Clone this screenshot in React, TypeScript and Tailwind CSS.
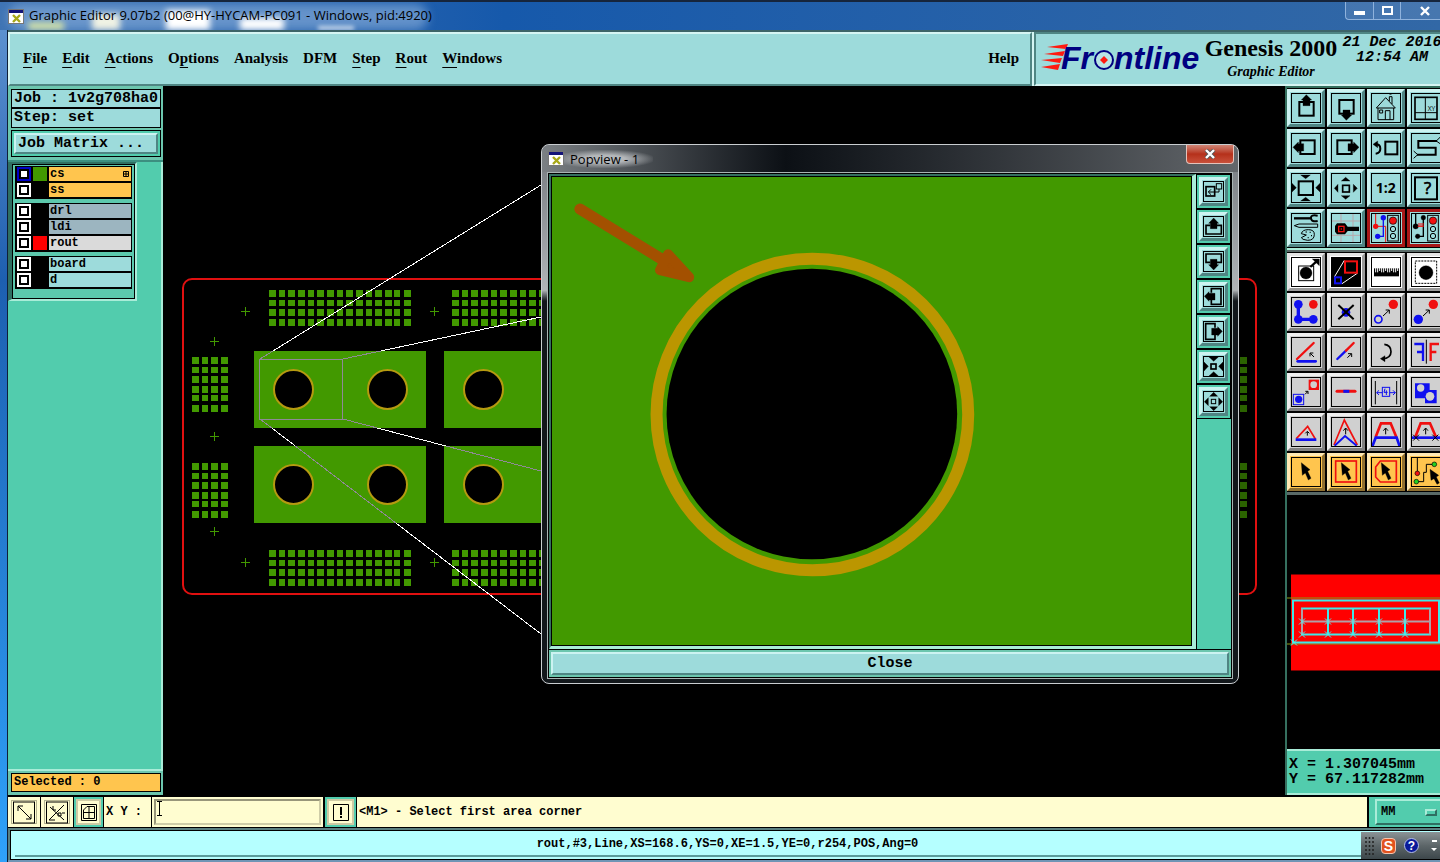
import { ReactNode, useState } from "react";
import clsx from "clsx";

const MENUS: [string, number][] = [
  ["File", 0],
  ["Edit", 0],
  ["Actions", 0],
  ["Options", 1],
  ["Analysis", -1],
  ["DFM", -1],
  ["Step", 0],
  ["Rout", 0],
  ["Windows", 0],
];

const LAYER_GROUPS = [
  [
    { name: "cs", swatch: "bg-[#429900]", face: "bg-[#ffc54e]", active: true },
    { name: "ss", swatch: "bg-black", face: "bg-[#ffc54e]" },
  ],
  [
    { name: "drl", swatch: "bg-black", face: "bg-[#9cb5c0]" },
    { name: "ldi", swatch: "bg-black", face: "bg-[#9cb5c0]" },
    { name: "rout", swatch: "bg-[#ff0000]", face: "bg-[#dadada]" },
  ],
  [
    { name: "board", swatch: "bg-black", face: "bg-[#9ddbdb]" },
    { name: "d", swatch: "bg-black", face: "bg-[#9ddbdb]" },
  ],
];

const RED = "#f01010";
const BLUE = "#1010f0";

type Tool = { label: string; art: ReactNode; tone?: "red" | "white" };

const cursor = <path d="M31 17L57 38L50 43L60 64L52 69L43 48L34 55Z" fill="#000" />;
const upArrow = <path d="M44 52V34M37 41L44 33L51 41" stroke="#000" strokeWidth="3" />;

const VIEW_TOOLS: Tool[] = [
  {
    label: "Pan up",
    art: (
      <>
        <rect x="25" y="27" width="43" height="41" strokeWidth="6" />
        <path d="M46 5L62 21H57V38H36V21H31Z" fill="#000" />
      </>
    ),
  },
  {
    label: "Pan down",
    art: (
      <>
        <rect x="25" y="21" width="43" height="41" strokeWidth="6" />
        <path d="M46 82L62 66H57V51H36V66H31Z" fill="#000" />
      </>
    ),
  },
  {
    label: "Home",
    art: (
      <path
        d="M16 45L44 14L73 45ZM21 45V80H68V45M43 80V53H57V80M26 51H35V60H26ZM55 24V11H63V33M56 4L66 1"
        strokeWidth="3"
      />
    ),
  },
  {
    label: "Go to coordinates",
    art: (
      <>
        <rect x="12" y="13" width="66" height="66" strokeWidth="5" />
        <path d="M43 12V78M12 59H78" strokeWidth="3" />
        <text x="50" y="54" fontSize="20" fill="#000" stroke="none">XY</text>
      </>
    ),
  },
  {
    label: "Pan left",
    art: (
      <>
        <rect x="28" y="22" width="43" height="41" strokeWidth="6" />
        <path d="M6 43L22 27V32H38V54H22V59Z" fill="#000" />
      </>
    ),
  },
  {
    label: "Pan right",
    art: (
      <>
        <rect x="19" y="22" width="43" height="41" strokeWidth="6" />
        <path d="M84 43L68 27V32H51V54H68V59Z" fill="#000" />
      </>
    ),
  },
  {
    label: "Previous view",
    art: (
      <>
        <rect x="43" y="26" width="36" height="38" strokeWidth="6" />
        <path d="M14 34Q28 34 28 47T14 62" strokeWidth="6" />
        <path d="M6 34L20 24V44Z" fill="#000" />
      </>
    ),
  },
  {
    label: "Snake",
    art: (
      <>
        <path d="M78 24H22V44H74V65H18" strokeWidth="6" />
        <path d="M76 24L88 12M76 24L90 34M20 65L8 54M20 65L8 76" strokeWidth="3" />
      </>
    ),
  },
  {
    label: "Zoom out",
    art: (
      <>
        <rect x="23" y="25" width="43" height="41" strokeWidth="6" />
        <path d="M29 6H58L44 17ZM29 84H58L44 73ZM2 30V58L16 44ZM88 30V58L74 44Z" fill="#000" />
      </>
    ),
  },
  {
    label: "Zoom in",
    art: (
      <>
        <rect x="35" y="37" width="20" height="20" strokeWidth="5" />
        <path d="M31 24H57L44 13ZM31 68H57L44 79ZM21 34V58L10 46ZM67 34V58L79 46Z" fill="#000" />
      </>
    ),
  },
  {
    label: "Scale one to two",
    art: (
      <text x="44" y="60" fontSize="42" fontWeight="700" textAnchor="middle" fill="#000" stroke="none">
        1:2
      </text>
    ),
  },
  {
    label: "Query",
    art: (
      <>
        <rect x="12" y="13" width="66" height="66" strokeWidth="6" />
        <text x="50" y="64" fontSize="50" textAnchor="middle" fill="#000" strokeWidth="2">
          ?
        </text>
      </>
    ),
  },
  {
    label: "Preferences",
    art: (
      <>
        <path d="M9 16H62" strokeWidth="7" />
        <path d="M80 8Q58 4 60 16T80 24" strokeWidth="6" />
        <path d="M10 38L24 33H80V43H24Z" strokeWidth="3" />
        <path d="M31 62Q34 50 52 50T70 64Q70 82 50 82Q32 80 31 74L46 66Z" strokeWidth="3" />
        <path d="M44 57h3M56 58h3M60 68h3M50 74h3" strokeWidth="4" />
      </>
    ),
  },
  {
    label: "Magnify",
    art: (
      <>
        <path d="M30 2V88M66 2V88M2 24H88M2 67H88" stroke="#b9a9ad" strokeWidth="3" />
        <path d="M18 31H42L50 41H84V54H50L42 64H18L12 56V39Z" fill="#000" stroke="none" />
        <rect x="23" y="40" width="16" height="16" stroke={RED} strokeWidth="4" />
        <rect x="29" y="46" width="4" height="4" fill={RED} stroke="none" />
      </>
    ),
  },
  {
    label: "Net check",
    tone: "red",
    art: (
      <>
        <path d="M14 2V40H44V88" stroke={RED} strokeWidth="3" />
        <circle cx="14" cy="40" r="8" fill={RED} stroke="none" />
        <path d="M37 14V70H20" stroke={BLUE} strokeWidth="4" />
        <circle cx="37" cy="14" r="8" fill={BLUE} stroke="none" />
        <circle cx="20" cy="70" r="8" fill={BLUE} stroke="none" />
        <rect x="50" y="7" width="32" height="77" strokeWidth="3" />
        <circle cx="66" cy="23" r="11" fill={RED} strokeWidth="2" />
        <circle cx="66" cy="48" r="8" strokeWidth="3" />
        <circle cx="66" cy="69" r="8" strokeWidth="3" />
      </>
    ),
  },
  {
    label: "Net resistance",
    tone: "red",
    art: (
      <>
        <path d="M37 14V70H20M14 2V40" strokeWidth="4" />
        <circle cx="14" cy="40" r="8" fill="#000" />
        <circle cx="37" cy="14" r="7" fill="#000" />
        <circle cx="20" cy="70" r="7" fill="#000" />
        <path d="M20 40H38M24 40V30M30 40V30M36 40V30" stroke={RED} strokeWidth="3" />
        <rect x="50" y="7" width="32" height="77" strokeWidth="3" />
        <circle cx="66" cy="23" r="11" fill={RED} strokeWidth="2" />
        <circle cx="66" cy="48" r="8" strokeWidth="3" />
        <circle cx="66" cy="69" r="8" strokeWidth="3" />
      </>
    ),
  },
];

const EDIT_TOOLS: Tool[] = [
  {
    label: "Move feature",
    tone: "white",
    art: (
      <>
        <rect x="23" y="27" width="45" height="44" strokeWidth="3" />
        <circle cx="45" cy="48" r="18" fill="#000" />
        <path d="M58 30L76 14" strokeWidth="7" />
        <path d="M64 6H85V26Z" fill="#000" />
      </>
    ),
  },
  {
    label: "Popview",
    tone: "white",
    art: (
      <>
        <rect width="90" height="90" fill="#000" />
        <path d="M40 10L10 60M80 48L33 80" stroke="#fff" strokeWidth="3" />
        <rect x="42" y="13" width="36" height="34" stroke={RED} strokeWidth="6" />
        <rect x="12" y="61" width="18" height="18" stroke={BLUE} strokeWidth="6" />
      </>
    ),
  },
  {
    label: "Measure",
    tone: "white",
    art: (
      <>
        <rect x="9" y="34" width="75" height="24" fill="#000" stroke="none" />
        <path
          d="M14 32V46M20 32V46M26 32V42M32 32V46M38 32V46M44 32V42M50 32V46M56 32V46M62 32V42M68 32V46M74 32V46M80 32V42"
          stroke="#fff"
          strokeWidth="3"
        />
      </>
    ),
  },
  {
    label: "Select area",
    tone: "white",
    art: (
      <>
        <rect x="13" y="12" width="64" height="67" strokeWidth="3" strokeDasharray="6 3" />
        <circle cx="45" cy="47" r="21" fill="#000" />
      </>
    ),
  },
  {
    label: "Connect pads",
    art: (
      <>
        <path d="M22 22V67H67" stroke={BLUE} strokeWidth="10" />
        <circle cx="22" cy="22" r="13" fill={BLUE} stroke="none" />
        <circle cx="22" cy="67" r="13" fill={BLUE} stroke="none" />
        <circle cx="67" cy="67" r="13" fill={BLUE} stroke="none" />
        <circle cx="67" cy="22" r="13" fill={RED} stroke="none" />
      </>
    ),
  },
  {
    label: "Delete",
    art: (
      <>
        <circle cx="45" cy="46" r="13" fill={BLUE} stroke="none" />
        <path d="M22 24L68 67M68 24L22 67" strokeWidth="6" />
      </>
    ),
  },
  {
    label: "Change symbol",
    art: (
      <>
        <circle cx="67" cy="22" r="14" fill={RED} stroke="none" />
        <circle cx="22" cy="67" r="11" stroke={BLUE} strokeWidth="5" />
        <path d="M36 57L54 40M44 39H55V50" strokeWidth="3" />
      </>
    ),
  },
  {
    label: "Copy",
    art: (
      <>
        <circle cx="67" cy="22" r="14" fill={RED} stroke="none" />
        <circle cx="22" cy="67" r="14" fill={BLUE} stroke="none" />
        <path d="M36 57L54 40M44 39H55V50" strokeWidth="3" />
      </>
    ),
  },
  {
    label: "Change angle",
    art: (
      <>
        <path d="M20 73H74" stroke={BLUE} strokeWidth="8" strokeLinecap="round" />
        <path d="M18 66L68 18" stroke={RED} strokeWidth="7" strokeLinecap="round" />
        <path d="M69 60L58 49M57 58V48H67" strokeWidth="3" />
      </>
    ),
  },
  {
    label: "Extend line",
    art: (
      <>
        <path d="M19 66L45 41" stroke={BLUE} strokeWidth="7" strokeLinecap="round" />
        <path d="M45 41L68 18" stroke={RED} strokeWidth="7" strokeLinecap="round" />
        <path d="M49 62L61 51M51 50H62V60" strokeWidth="3" />
      </>
    ),
  },
  {
    label: "Rotate",
    art: (
      <>
        <path d="M40 22Q60 24 60 44T34 65" strokeWidth="5" />
        <path d="M28 65L42 56V74Z" fill="#000" />
      </>
    ),
  },
  {
    label: "Mirror",
    art: (
      <>
        <path d="M10 21H36V72M18 45H36" stroke={BLUE} strokeWidth="7" />
        <path d="M84 21H59V72M76 45H59" stroke={RED} strokeWidth="7" />
        <path d="M46 8V80" strokeWidth="3" />
      </>
    ),
  },
  {
    label: "Replace",
    art: (
      <>
        <rect x="53" y="8" width="31" height="31" fill={RED} stroke="none" />
        <circle cx="68" cy="23" r="10" fill="#d0d0d0" stroke="none" />
        <rect x="7" y="52" width="31" height="31" stroke={BLUE} strokeWidth="3" />
        <circle cx="23" cy="67" r="11" fill={BLUE} stroke="none" />
        <path d="M42 52L50 44M43 43H51V51" strokeWidth="3" />
      </>
    ),
  },
  {
    label: "Break line",
    art: (
      <>
        <path d="M18 43H72" stroke={RED} strokeWidth="9" strokeLinecap="round" />
        <path d="M37 43H55" stroke={BLUE} strokeWidth="9" />
      </>
    ),
  },
  {
    label: "Spacing",
    art: (
      <>
        <path d="M13 12V82M77 12V82" strokeWidth="3" />
        <g stroke={BLUE} strokeWidth="3">
          <rect x="34" y="31" width="22" height="27" />
          <path d="M34 47H17M24 40L17 47L24 54M56 47H73M66 40L73 47L66 54M42 35L39 46H50M46 40V54" />
        </g>
      </>
    ),
  },
  {
    label: "Merge",
    art: (
      <>
        <path d="M12 19H56V39H77V79H42V64H12Z" fill={BLUE} stroke="none" />
        <circle cx="29" cy="33" r="11" fill="#d0d0d0" stroke="none" />
        <circle cx="57" cy="58" r="13" fill="#d0d0d0" stroke="none" />
      </>
    ),
  },
  {
    label: "Slide segment",
    art: (
      <>
        <path d="M16 65L50 28L73 66" stroke={RED} strokeWidth="5" />
        <path d="M14 68H76" stroke={BLUE} strokeWidth="8" />
        <path d="M49 56V44M43 49L49 43L55 49" strokeWidth="3" />
      </>
    ),
  },
  {
    label: "Move corner",
    art: (
      <>
        <path d="M9 84L40 9L79 84" stroke={RED} strokeWidth="5" />
        <path d="M11 86L42 57L77 86" stroke={BLUE} strokeWidth="6" />
        {upArrow}
      </>
    ),
  },
  {
    label: "Stretch parallel",
    art: (
      <>
        <path d="M14 60L30 19H59L76 60" stroke={RED} strokeWidth="8" />
        <path d="M4 88L14 62H77L86 88" stroke={BLUE} strokeWidth="8" />
        {upArrow}
      </>
    ),
  },
  {
    label: "Stretch fixed",
    art: (
      <>
        <path d="M13 60L29 19H57L75 60" stroke={RED} strokeWidth="8" />
        <path d="M0 62H90" stroke={BLUE} strokeWidth="8" />
        <path d="M6 53L24 71M24 53L6 71M64 53L82 71M82 53L64 71" strokeWidth="3" />
        {upArrow}
      </>
    ),
  },
];

const SELECT_TOOLS: Tool[] = [
  { label: "Select single", art: cursor },
  {
    label: "Select rectangle",
    art: (
      <>
        <rect x="14" y="12" width="62" height="63" stroke={RED} strokeWidth="5" />
        {cursor}
      </>
    ),
  },
  {
    label: "Select polygon",
    art: (
      <>
        <path d="M28 12H76V75H28L14 60V30Z" stroke={RED} strokeWidth="5" />
        {cursor}
      </>
    ),
  },
  {
    label: "Select net",
    art: (
      <>
        <path d="M19 2V44M16 74H38V46H46V22H66" strokeWidth="3" />
        <circle cx="19" cy="49" r="7" fill={RED} strokeWidth="2" />
        <circle cx="16" cy="74" r="7" fill="#22d022" strokeWidth="2" />
        <circle cx="70" cy="22" r="7" fill="#22d022" strokeWidth="2" />
        <path d="M57 37L83 55L76 60L85 78L78 82L69 65L60 70Z" fill="#000" />
      </>
    ),
  },
];

const POP_TOOLS: Tool[] = [
  {
    label: "Select popup area",
    art: (
      <>
        <rect x="9" y="17" width="26" height="28" strokeWidth="5" />
        <rect x="40" y="8" width="16" height="16" strokeWidth="3" />
        <path d="M48 24V33H16M24 25L16 33L24 41" strokeWidth="3" />
      </>
    ),
  },
  {
    label: "Popup up",
    art: (
      <>
        <path d="M22 28H9V54H55V28H42" strokeWidth="5" />
        <path d="M32 6L47 22H42V38H22V22H17Z" fill="#000" />
      </>
    ),
  },
  {
    label: "Popup down",
    art: (
      <>
        <path d="M22 34H9V9H55V34H42" strokeWidth="5" />
        <path d="M32 57L47 41H42V25H22V41H17Z" fill="#000" />
      </>
    ),
  },
  {
    label: "Popup left",
    art: (
      <>
        <path d="M25 20V8H54V55H25V42" strokeWidth="5" />
        <path d="M4 31L18 17V22H36V42H18V46Z" fill="#000" />
      </>
    ),
  },
  {
    label: "Popup right",
    art: (
      <>
        <path d="M36 20V8H8V55H36V42" strokeWidth="5" />
        <path d="M58 31L44 17V22H26V42H44V46Z" fill="#000" />
      </>
    ),
  },
  {
    label: "Popup zoom out",
    art: (
      <>
        <rect x="24" y="24" width="15" height="15" strokeWidth="5" />
        <path d="M18 3H46L32 16ZM18 60H46L32 47ZM3 18V45L16 31ZM60 18V45L47 31Z" fill="#000" />
      </>
    ),
  },
  {
    label: "Popup zoom in",
    art: (
      <>
        <rect x="25" y="25" width="13" height="13" strokeWidth="3" />
        <path d="M20 16H44L32 4ZM20 47H44L32 59ZM16 20V44L4 32ZM47 20V44L59 32Z" fill="#000" />
      </>
    ),
  },
];

function ToolButton({ tool, palette }: { tool: Tool; palette: "teal" | "grey" | "gold" }) {
  return (
    <button
      aria-label={tool.label}
      className={clsx(
        "h-[38px] w-[38px] shrink-0 border-[3px] p-px",
        tool.tone === "red" && "border-[#a81818] bg-[#9ddbdb]",
        tool.tone === "white" && "border-t-[#e4e4e4] border-l-[#e4e4e4] border-r-[#9a9a9a] border-b-[#9a9a9a] bg-white",
        !tool.tone && palette === "teal" &&
          "border-t-[#ccf3f1] border-l-[#ccf3f1] border-r-[#4f8583] border-b-[#4f8583] bg-[#9ddbdb]",
        !tool.tone && palette === "grey" &&
          "border-t-[#efefef] border-l-[#efefef] border-r-[#808080] border-b-[#808080] bg-[#d0d0d0]",
        palette === "gold" &&
          "border-t-[#ffe9b4] border-l-[#ffe9b4] border-r-[#8f6f30] border-b-[#8f6f30] bg-[#ffc54e]"
      )}
    >
      <span className="block h-[30px] w-[30px] border border-black">
        <svg viewBox="3 3 84 84" fill="none" stroke="#000" className="h-7 w-7" aria-hidden>
          {tool.art}
        </svg>
      </span>
    </button>
  );
}

function AppIcon() {
  return (
    <svg width="16" height="15" viewBox="0 0 16 15" aria-hidden className="z-10 shrink-0">
      <rect x="0.5" y="0.5" width="15" height="14" fill="#fff" stroke="#777" />
      <rect x="1" y="1" width="14" height="3" fill="#141478" />
      <path d="M5 6L12 13M12 6L5 13" stroke="#a8a818" strokeWidth="2.4" />
    </svg>
  );
}

function Logo() {
  return (
    <svg
      width="162"
      height="44"
      viewBox="0 -6 162 44"
      role="img"
      aria-label="Frontline"
      className="shrink-0 overflow-visible"
    >
      <path fill="#ff1a10" d="M6 4L27 1L25 6ZM3 11L24 8L22 13ZM0 17L21 15L19 20ZM0 24L19 21L17 27Z" />
      <g
        fill="#000080"
        fontFamily="'Liberation Sans', sans-serif"
        fontSize="32"
        fontWeight="700"
        fontStyle="italic"
      >
        <text x="20" y="26">Fr</text>
        <text x="73" y="26">ntline</text>
      </g>
      <circle cx="63" cy="17" r="9" fill="#b8e4e4" stroke="#000080" strokeWidth="2" />
      <path d="M63 13L67 17L63 21L59 17Z" fill="#ff1a10" />
    </svg>
  );
}

function Pads({ x, y, cols, rows }: { x: number; y: number; cols: number; rows: number }) {
  const pads: ReactNode[] = [];
  for (let r = 0; r < rows; r++) {
    for (let c = 0; c < cols; c++) {
      pads.push(
        <rect
          key={`${r}-${c}`}
          x={Math.round(x + c * 9.65)}
          y={Math.round(y + r * 9.6)}
          width={c % 3 === 1 ? 6 : 7}
          height={r % 3 === 1 ? 6 : 7}
        />
      );
    }
  }
  return <g shapeRendering="crispEdges">{pads}</g>;
}

const PANELS = [
  [254, 351],
  [254, 446],
  [444, 351],
  [444, 446],
];
const CROSSES = [
  [245, 311],
  [434, 311],
  [245, 562],
  [434, 562],
  [214, 341],
  [214, 436],
  [214, 531],
];
const RAYS = "M260 359L541 185M343 359L541 317M343 419L541 471M260 419L541 634";

function Board() {
  return (
    <svg
      viewBox="163 86 1122 709"
      preserveAspectRatio="xMinYMin meet"
      className="h-full w-full"
      aria-label="Board view"
    >
      <defs>
        <clipPath id="panels">
          {PANELS.map(([x, y]) => (
            <rect key={`${x}-${y}`} x={x} y={y} width="172" height="77" />
          ))}
        </clipPath>
      </defs>
      <rect x="183" y="279" width="1073" height="315" rx="9" fill="none" stroke="#e01010" strokeWidth="2" />
      <g fill="#429900">
        <Pads x={269} y={290} cols={15} rows={4} />
        <Pads x={452} y={290} cols={15} rows={4} />
        <Pads x={269} y={550} cols={15} rows={4} />
        <Pads x={452} y={550} cols={15} rows={4} />
        <Pads x={192} y={357} cols={4} rows={6} />
        <Pads x={192} y={463} cols={4} rows={6} />
        <g opacity="0.65">
          <Pads x={1240} y={357} cols={1} rows={6} />
          <Pads x={1240} y={463} cols={1} rows={6} />
        </g>
      </g>
      {PANELS.map(([x, y]) => (
        <g key={`${x}-${y}`}>
          <rect x={x} y={y} width="172" height="77" fill="#429900" />
          <circle cx={x + 39.5} cy={y + 38.5} r="19.5" stroke="#b59a10" strokeWidth="2" />
          <circle cx={x + 133.5} cy={y + 38.5} r="19.5" stroke="#b59a10" strokeWidth="2" />
        </g>
      ))}
      <path d={CROSSES.map(([x, y]) => `M${x - 4} ${y}.5h9M${x}.5 ${y - 4}v9`).join("")} stroke="#429900" />
      <path d={RAYS} stroke="#fff" shapeRendering="crispEdges" />
      <path d={RAYS} stroke="#8f8a96" clipPath="url(#panels)" shapeRendering="crispEdges" />
      <rect x="259.5" y="359.5" width="83" height="60" fill="none" stroke="#8f8a96" />
    </svg>
  );
}

function Popview({ onClose }: { onClose: () => void }) {
  return (
    <section
      role="dialog"
      aria-label="Popview - 1"
      className="absolute left-[378px] top-[58px] flex h-[540px] w-[698px] flex-col rounded-lg border border-[#c9cdd0] bg-linear-to-b from-[#74797e] via-[#b0b4b7] via-27% to-[#12171b] to-29% px-[5px] pb-[4px]"
    >
      <header className="-mx-[5px] flex h-[27px] shrink-0 items-center rounded-t-lg bg-linear-to-r from-[#7b8084] via-[#0c1015] via-35% to-[#63676b] pl-[6px]">
        <AppIcon />
        <h2 className="-ml-2 flex-1 text-[13px] leading-5">
          <span className="bg-radial from-[#b4b7ba] from-30% to-transparent to-75% px-3.5">Popview - 1</span>
        </h2>
        <button
          onClick={onClose}
          aria-label="Close popview"
          className="mr-1 flex h-[19px] w-[48px] items-center justify-center self-start rounded-b border border-t-0 border-[#e5c3bb] bg-linear-to-b from-[#d08475] via-[#b5301a] via-50% to-[#c8503a]"
        >
          <svg width="12" height="10" viewBox="0 0 12 10" aria-hidden>
            <path d="M2 1L10 9M10 1L2 9" stroke="#555" strokeWidth="4" />
            <path d="M2 1L10 9M10 1L2 9" stroke="#fff" strokeWidth="2.4" />
          </svg>
        </button>
      </header>
      <div className="flex min-h-0 flex-1 flex-col border border-[#a9b4b4] bg-black p-px">
        <div className="flex min-h-0 flex-1">
          <div className="min-w-0 flex-1 border-t-2 border-r-4 border-b-[3px] border-l-2 border-t-[#35705f] border-l-[#35705f] border-r-[#a9ecd8] border-b-[#a9ecd8]">
            <svg
              viewBox="552 177 640 467"
              preserveAspectRatio="xMidYMid slice"
              className="h-full w-full border border-black bg-[#429900]"
              aria-label="Enlarged hole"
            >
              <circle cx="813" cy="414" r="155.5" fill="none" stroke="#bb9600" strokeWidth="12" />
              <circle cx="812.5" cy="413.5" r="145" />
              <g fill="#a35000" stroke="#a35000" strokeLinejoin="round" strokeLinecap="round">
                <path d="M581 209L666 261" strokeWidth="11" />
                <path d="M669 254L690 277L661 270Z" strokeWidth="10" />
              </g>
            </svg>
          </div>
          <div className="w-[35px] shrink-0 border-l border-black bg-[#52ccad]">
            <div className="flex flex-col gap-[2px] bg-black py-px">
              {POP_TOOLS.map((t) => (
                <button key={t.label} aria-label={t.label} className="h-[33px] w-[33px] bg-[#52ccad] p-[2px]">
                  <span className="block h-[29px] w-[29px] border-[3px] border-t-[#ccf3f1] border-l-[#ccf3f1] border-r-[#4f8583] border-b-[#4f8583] bg-[#9ddbdb] p-px">
                    <svg viewBox="0 0 63 63" fill="none" stroke="#000" className="h-[21px] w-[21px]" aria-hidden>
                      <rect x="1.5" y="1.5" width="60" height="60" strokeWidth="3" />
                      {t.art}
                    </svg>
                  </span>
                </button>
              ))}
            </div>
          </div>
        </div>
        <div className="mt-px bg-[#6cc6ae] p-[2px]">
          <button
            onClick={onClose}
            className="block h-[23px] w-full border-2 border-t-[#ccf3f1] border-l-[#ccf3f1] border-r-[#4f8583] border-b-[#4f8583] bg-[#9ddbdb] font-['Liberation_Mono',monospace] text-[15px] leading-[18px] font-bold"
          >
            Close
          </button>
        </div>
      </div>
    </section>
  );
}

function Overview() {
  const marks = [1302, 1328, 1353, 1379, 1405].flatMap((x) => [
    [x, 622],
    [x, 635],
  ]);
  return (
    <svg
      viewBox="1287 497 153 251"
      preserveAspectRatio="xMinYMid meet"
      className="min-h-0 w-full flex-1 bg-black"
      fill="none"
      aria-label="Board overview"
    >
      <rect x="1291" y="575" width="160" height="96" fill="#ff0000" />
      <rect x="1286.5" y="598.5" width="170" height="46" stroke="#8a9a10" />
      <rect x="1293" y="601" width="146" height="42" stroke="#40e8e8" strokeWidth="2" />
      <path
        d="M1301 609H1431M1301 635H1431M1328 609V635M1353 609V635M1379 609V635M1405 609V635"
        stroke="#40e8e8"
        strokeWidth="2"
      />
      <path d="M1302 609V635M1430 609V635M1301 622H1431" stroke="#b0a0a8" strokeWidth="2" />
      <path
        d={[...marks, [1294, 643]].map(([x, y]) => `M${x - 3} ${y - 3}l6 6m0-6l-6 6`).join("")}
        stroke="#50f0f0"
      />
    </svg>
  );
}

function SmallArt({ children }: { children: ReactNode }) {
  return (
    <svg width="22" height="23" viewBox="0 0 22 23" fill="none" stroke="#000" aria-hidden>
      <rect x="0.5" y="1" width="21" height="21" />
      {children}
    </svg>
  );
}

function Tray() {
  return (
    <div className="absolute right-0 bottom-px flex h-[27px] w-[79px] items-center gap-2 bg-linear-to-b from-[#8b9396] via-[#5d6669] to-[#3d474b] pl-1">
      <svg width="9" height="18" viewBox="0 0 9 18" fill="none" stroke="#222" strokeDasharray="2 2" aria-hidden>
        <path d="M1 0V18M4.5 0V18M8 0V18" strokeWidth="1.5" />
      </svg>
      <button
        aria-label="Input method"
        className="-ml-px flex h-4 w-[15px] items-center justify-center rounded-sm border border-[#f4c5b0] bg-[#e2531f] font-['Liberation_Sans',sans-serif] text-sm leading-4 font-bold text-white"
      >
        S
      </button>
      <button
        aria-label="Help"
        className="flex h-[15px] w-[15px] items-center justify-center rounded-full border border-[#b5c0e8] bg-[#0a1a9a] font-['Liberation_Sans',sans-serif] text-xs leading-3 font-bold text-white"
      >
        ?
      </button>
      <svg width="7" height="13" viewBox="0 0 7 13" fill="#fff" aria-hidden className="ml-1">
        <path d="M1 1H6V3H1ZM0 9H6L3 12Z" />
      </svg>
    </div>
  );
}

export default function App() {
  const [coords, setCoords] = useState("");
  const [popOpen, setPopOpen] = useState(true);

  return (
    <div className="flex h-screen w-full flex-col overflow-hidden bg-[#22599f] font-['Open_Sans','Noto_Sans',sans-serif] text-black">
      <header className="relative flex h-[30px] shrink-0 items-center overflow-hidden border-t-2 border-[#16253c] bg-linear-to-r from-[#3f74b4] via-[#1659ab] via-35% to-[#3268a6] pl-2">
        {/* desktop icons showing through the glass */}
        <div aria-hidden className="absolute inset-x-0 bottom-0 h-[26px]">
          <div className="absolute top-0 left-2 h-full w-[420px] rounded-full bg-[#7fa6d6]/70 blur-[5px]" />
          <div className="absolute bottom-0 left-7 h-2 w-9 bg-[#d3e2a8] blur-[3px]" />
          <div className="absolute bottom-0 left-[92px] h-4 w-7 bg-[#f0f2e4] blur-[3px]" />
          <div className="absolute bottom-0 left-[166px] h-5 w-11 bg-white blur-[3px]" />
          <div className="absolute bottom-0 left-[240px] h-3 w-11 bg-white blur-[3px]" />
          <div className="absolute bottom-0 left-[318px] h-1 w-9 bg-white/70 blur-[2px]" />
        </div>
        <AppIcon />
        <h1 className="relative min-w-0 flex-1 pb-[2px] pl-[5px] text-[13px] leading-5 whitespace-nowrap">
          Graphic Editor 9.07b2 (00@HY-HYCAM-PC091 - Windows, pid:4920)
        </h1>
        <div className="relative flex h-[18px] w-[95px] shrink-0 self-start overflow-hidden rounded-bl border-b border-l border-[#8fb2dc] bg-white/10">
          <button aria-label="Minimize" className="flex w-7 shrink-0 items-center justify-center border-r border-[#8fb2dc]">
            <span className="mt-1 h-1 w-[11px] bg-white" />
          </button>
          <button aria-label="Maximize" className="flex w-[27px] shrink-0 items-center justify-center border-r border-[#8fb2dc]">
            <span className="h-[9px] w-[11px] border-2 border-white" />
          </button>
          <button aria-label="Close" className="flex w-[47px] shrink-0 items-center justify-center">
            <svg width="12" height="10" viewBox="0 0 12 10" aria-hidden>
              <path d="M2 1L10 9M10 1L2 9" stroke="#fff" strokeWidth="2.4" />
            </svg>
          </button>
        </div>
      </header>

      <div className="flex min-h-0 flex-1">
        <div className="w-2 shrink-0 border-r border-[#0f1f38] bg-linear-to-b from-[#5c90cf] via-[#1d5fb0] via-30% to-[#2fa2fb]" />

        <div className="flex min-w-0 flex-1 flex-col bg-black">
          {/* menu bar and product banner */}
          <div className="flex h-14 shrink-0 border-t-2 border-[#3d6468] bg-[#d5f5f3] font-['Liberation_Serif',serif]">
            <nav className="flex min-w-0 flex-1 items-center gap-[15px] border-2 border-t-[#d5f5f3] border-l-[#d5f5f3] border-r-[#4f8583] border-b-[#4f8583] bg-[#9ddbdb] pr-[11px] pb-[3px] pl-[13px] text-[15px] font-bold">
              {MENUS.map(([name, at]) => (
                <button key={name} className="leading-5">
                  {at < 0 ? (
                    name
                  ) : (
                    <>
                      {name.slice(0, at)}
                      <span className="underline underline-offset-4">{name[at]}</span>
                      {name.slice(at + 1)}
                    </>
                  )}
                </button>
              ))}
              <button className="ml-auto leading-5">Help</button>
            </nav>
            <div className="ml-[2px] flex w-[406px] shrink-0 items-center overflow-hidden border-t-2 border-b-2 border-l-2 border-t-[#4f8583] border-l-[#4f8583] border-b-[#d5f5f3] bg-[#9ddbdb] pl-[5px]">
              <Logo />
              <div className="w-[136px] shrink-0 pb-[2px] text-center whitespace-nowrap">
                <p className="text-[24px] leading-7 font-bold">Genesis 2000</p>
                <p className="text-[14px] leading-5 font-bold italic">Graphic Editor</p>
              </div>
              <div className="w-[106px] shrink-0 self-start pt-px text-center font-['Liberation_Mono',monospace] text-[15px] leading-[15px] font-bold whitespace-nowrap italic">
                <p>21 Dec 2016</p>
                <p>12:54 AM</p>
              </div>
            </div>
          </div>

          <div className="flex min-h-0 flex-1">
            {/* job and layers */}
            <aside className="flex w-[155px] shrink-0 flex-col bg-[#52ccad] font-['Liberation_Mono',monospace] font-bold">
              <div className="flex flex-col gap-[2px] border-b-2 border-[#3c8f80] bg-[#6cc6ae] p-[3px] pr-[2px] text-[15px] leading-4">
                <div className="divide-y-2 divide-black border border-black bg-[#9ddbdb] whitespace-pre">
                  <p className="h-[19px] px-[2px] pt-px">Job : 1v2g708ha0</p>
                  <p className="h-[18px] px-[2px] pt-px">Step: set</p>
                </div>
                <div className="border border-black bg-[#52ccad] p-[2px]">
                  <button className="block h-[21px] w-full border-2 border-t-[#ccf3f1] border-l-[#ccf3f1] border-r-[#4f8583] border-b-[#4f8583] bg-[#9ddbdb] pl-[2px] text-left font-bold">
                    Job Matrix ...
                  </button>
                </div>
              </div>
              <div className="min-h-0 flex-1 border-r-2 border-b-2 border-[#a9ecd8]">
                <fieldset className="w-[129px] border-t-2 border-r-2 border-b-2 border-l-4 border-t-[#2f6f62] border-l-[#2f6f62] border-r-[#a9ecd8] border-b-[#a9ecd8]">
                  <div className="flex flex-col gap-1 border border-black bg-[#5cc9ad] pt-px pb-[9px] pl-[2px]">
                    {LAYER_GROUPS.map((group, i) => (
                      <div key={i} className="flex w-[117px] flex-col gap-[2px] bg-black p-px pb-[2px] pl-[2px]">
                        {group.map((layer) => (
                          <label
                            key={layer.name}
                            className="flex h-[14px] items-center gap-[2px] text-[12px] leading-[14px]"
                          >
                            <input
                              type="checkbox"
                              aria-label={`Show ${layer.name}`}
                              defaultChecked={layer.active}
                              className={clsx(
                                "h-[14px] w-[14px] shrink-0 appearance-none border-2 bg-white shadow-[inset_0_0_0_2px_#000]",
                                layer.active ? "border-[#0000c8]" : "border-white"
                              )}
                            />
                            <span className={clsx("h-[14px] w-[14px] shrink-0", layer.swatch)} />
                            <span className={clsx("flex h-full flex-1 items-center justify-between px-px", layer.face)}>
                              {layer.name}
                              {layer.active && (
                                <svg
                                  width="6"
                                  height="6"
                                  viewBox="0 0 6 6"
                                  fill="none"
                                  stroke="#000"
                                  aria-hidden
                                  className="mr-px"
                                >
                                  <path d="M.5 .5H5.5V5.5H.5ZM3 0V6M0 3H6" />
                                </svg>
                              )}
                            </span>
                          </label>
                        ))}
                      </div>
                    ))}
                  </div>
                </fieldset>
              </div>
              <div className="bg-[#6cc6ae] p-[3px] pt-[2px] pr-[2px]">
                <p className="h-[19px] border border-black bg-[#ffc54e] px-[2px] text-[12px] leading-[17px]">
                  Selected : 0
                </p>
              </div>
            </aside>

            <main className="relative min-w-0 flex-1 bg-black">
              <Board />
              {popOpen && <Popview onClose={() => setPopOpen(false)} />}
            </main>

            {/* tool palettes */}
            <aside className="flex w-[155px] shrink-0 flex-col overflow-hidden border-l-2 border-[#35705f] bg-black">
              <div className="grid shrink-0 grid-cols-[38px_38px_38px_38px] gap-[2px] border-t-2 border-b-2 border-t-[#35705f] border-b-[#a9ecd8] pt-px pb-px">
                {VIEW_TOOLS.map((t) => (
                  <ToolButton key={t.label} tool={t} palette="teal" />
                ))}
              </div>
              <div className="grid shrink-0 grid-cols-[38px_38px_38px_38px] gap-[2px] border-t-2 border-b-[3px] border-[#5a6a68] py-px">
                {EDIT_TOOLS.map((t) => (
                  <ToolButton key={t.label} tool={t} palette="grey" />
                ))}
                {SELECT_TOOLS.map((t) => (
                  <ToolButton key={t.label} tool={t} palette="gold" />
                ))}
              </div>
              <Overview />
              <div className="shrink-0 border-t-2 border-b-2 border-[#a9ecd8] bg-[#52ccad] py-[6px] pl-[2px] font-['Liberation_Mono',monospace] text-[15px] leading-[15px] font-bold whitespace-pre">
                <p>X = 1.307045mm</p>
                <p>Y = 67.117282mm</p>
              </div>
            </aside>
          </div>

          {/* command line */}
          <form
            onSubmit={(e) => e.preventDefault()}
            className="flex h-[33px] shrink-0 gap-px border-t-2 border-b border-black bg-black font-['Liberation_Mono',monospace] text-[12px] font-bold"
          >
            <button
              type="button"
              aria-label="Snap"
              className="flex w-8 items-center justify-center border-[3px] border-[#fffdd0] bg-[#fffdd0] shadow-[inset_0_0_0_1px_#b5b390]"
            >
              <SmallArt>
                <path d="M5 5L18 18M5 10V5H10M18 13V18H13" />
              </SmallArt>
            </button>
            <button
              type="button"
              aria-label="Angle"
              className="flex w-8 items-center justify-center border-[3px] border-[#fffdd0] bg-[#fffdd0] shadow-[inset_0_0_0_1px_#b5b390]"
            >
              <SmallArt>
                <path d="M3 19L18 4M4 6L18 19M3 19H9M7 5V9H10M12 12H15V15H12ZM16 12H19" />
              </SmallArt>
            </button>
            <button
              type="button"
              aria-label="Grid"
              className="flex w-[29px] items-center justify-center border-2 border-[#52ccad] bg-[#fffdd0] shadow-[inset_0_0_0_2px_#cfcba5]"
            >
              <svg width="16" height="17" viewBox="0 0 16 17" fill="none" stroke="#000" aria-hidden>
                <path d="M.5 .5H15.5V16.5H.5ZM6 2.5H13.5V14.5H2.5V6ZM8 2V14M3 8.5H13" />
              </svg>
            </button>
            <label htmlFor="xy" className="flex w-[47px] items-center bg-[#fffdd0] pl-[2px] whitespace-pre">
              X Y :
            </label>
            <div className="relative w-[171px] bg-[#fffdd0] p-[2px]">
              <input
                id="xy"
                value={coords}
                onChange={(e) => setCoords(e.target.value)}
                className="h-full w-full cursor-text border-2 border-t-[#98967a] border-l-[#98967a] border-r-[#cfcda8] border-b-[#cfcda8] bg-[#fffdd0] px-1 outline-none"
              />
              {/* pointer resting in the box */}
              <svg
                width="5"
                height="15"
                viewBox="0 0 5 15"
                fill="none"
                stroke="#000"
                aria-hidden
                className="pointer-events-none absolute top-1 left-[5px]"
              >
                <path d="M0 .5H5M2.5 0V15M0 14.5H5" />
              </svg>
            </div>
            <button
              type="button"
              aria-label="Alert"
              className="ml-px flex w-[31px] items-center justify-center border-2 border-[#52ccad] bg-[#fffdd0] shadow-[inset_0_0_0_2px_#cfcba5]"
            >
              <svg width="16" height="17" viewBox="0 0 16 17" fill="none" stroke="#000" aria-hidden>
                <path d="M.5 .5H15.5V16.5H.5Z" />
                <path d="M8 3V11M8 12V14" strokeWidth="2" />
              </svg>
            </button>
            <p className="flex min-w-0 flex-1 items-center bg-[#fffdd0] pl-[2px]">
              {"<M1> - Select first area corner"}
            </p>
            <div className="ml-px flex w-[71px] shrink-0 overflow-hidden bg-[#52ccad] py-[2px] pl-[6px]">
              <div className="flex w-20 shrink-0 items-center border-2 border-t-[#a9ecd8] border-l-[#a9ecd8] border-b-[#2f6f62] pl-1">
                <select
                  aria-label="Units"
                  className="w-11 appearance-none bg-transparent font-bold outline-none"
                >
                  <option>MM</option>
                  <option>Inch</option>
                </select>
                <span className="h-[7px] w-3 border-2 border-t-[#a9ecd8] border-l-[#a9ecd8] border-r-[#2f6f62] border-b-[#2f6f62]" />
              </div>
            </div>
          </form>

          <footer className="relative flex h-[34px] shrink-0 border-b-2 border-b-[#6f95b5] bg-[#5a7f80] pt-[2px] pl-[2px]">
            <div className="flex flex-1 border border-r-0 border-black bg-[#b5ffff] py-[2px] pl-1">
              <p className="flex flex-1 items-center justify-center border-b-2 border-b-[#5a9c9c] font-['Liberation_Mono',monospace] text-[12px] font-bold">
                rout,#3,Line,XS=168.6,YS=0,XE=1.5,YE=0,r254,POS,Ang=0
              </p>
            </div>
            <Tray />
          </footer>
        </div>
      </div>
    </div>
  );
}
